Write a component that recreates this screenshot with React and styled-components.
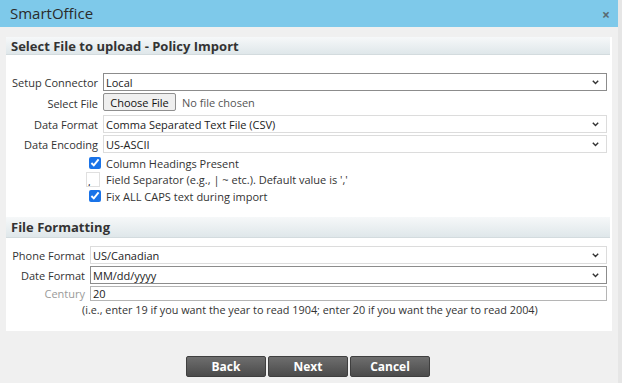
import React from 'react'
import styled, { createGlobalStyle } from 'styled-components'

const GlobalStyle = createGlobalStyle`
  html, body {
    margin: 0;
    padding: 0;
    background: #f0f0f0;
    font-family: "Open Sans", "Liberation Sans", sans-serif;
    color: #333;
  }
  * { box-sizing: border-box; }
`

const Dialog = styled.div`
  width: 622px;
  height: 383px;
  display: flex;
  flex-direction: column;
  background: #f0f0f0;
  border-right: 4px solid #e6e6e6;
`

const TitleBar = styled.div`
  height: 27px;
  background: #7ec9ea;
  display: flex;
  align-items: center;
  justify-content: space-between;
  padding: 0 10px;
`

const Title = styled.div`
  font-size: 15px;
  color: #2b2b2b;
  margin-top: -2px;
`

const Close = styled.div`
  font-size: 14px;
  font-weight: 700;
  color: #5a6a72;
  margin-right: -2px;
  margin-top: 1px;
`

const Panel = styled.div`
  margin: 10px 6px 0 6px;
  background: #fff;
  padding-bottom: 14px;
`

const SectionHeader = styled.div`
  height: ${p => p.$h || 18}px;
  margin-right: 2px;
  background: linear-gradient(#f6f8f9, #dfe7ea);
  border-bottom: 1px solid #d3dbde;
  font-size: 13px;
  font-weight: 700;
  color: #333;
  padding-left: 5px;
  display: flex;
  align-items: center;
`

const Fields = styled.div`
  display: grid;
  grid-template-columns: ${p => p.$label}px 1fr;
  column-gap: 5px;
  row-gap: ${p => p.$gap || 2}px;
  align-items: center;
  padding-right: 5px;
  margin-top: ${p => p.$top}px;
`

const Label = styled.label`
  font-size: 11px;
  line-height: 15px;
  text-align: right;
  color: ${p => (p.$muted ? '#9a9a9a' : '#333')};
  white-space: nowrap;
`

const SelectWrap = styled.div`
  position: relative;
  height: 18px;
`

const Select = styled.select`
  display: block;
  appearance: none;
  width: 100%;
  height: 18px;
  border: 1px solid ${p => (p.$strong ? '#8c8c8c' : '#dcdcdc')};
  border-radius: 0;
  background: #fff;
  font-family: inherit;
  font-size: 11px;
  color: #222;
  padding: 0 0 0 2px;
  margin: 0;
  outline: none;
`

const Chevron = styled.svg`
  position: absolute;
  right: 8px;
  top: 7px;
  pointer-events: none;
`

const TextInput = styled.input`
  display: block;
  width: 100%;
  height: 15px;
  border: 1px solid #b5b5b5;
  font-family: inherit;
  font-size: 11px;
  color: #222;
  padding: 0 2px;
  margin: 0;
  outline: none;
`

const FileRow = styled.div`
  display: flex;
  align-items: center;
  gap: 6px;
  height: 18px;
  margin: 0 0 2px;
`

const FileButton = styled.button`
  height: 18px;
  width: 73px;
  border: 1px solid #8f8f8f;
  border-radius: 2px;
  background: #efefef;
  font-family: inherit;
  font-size: 11px;
  color: #111;
  padding: 0;
`

const FileHint = styled.span`
  font-size: 11px;
  color: #555;
`

const Options = styled.div`
  display: flex;
  flex-direction: column;
  padding-left: 80px;
  margin-top: 2px;
`

const Option = styled.label`
  display: flex;
  align-items: center;
  height: ${p => p.$h || 16}px;
  font-size: 11px;
  color: #333;
`

const Check = styled.input`
  width: 12px;
  height: 12px;
  margin: 0 5px 0 3px;
  accent-color: #1a73e8;
`

const SepInput = styled.input`
  width: 14px;
  height: 15px;
  border: 1px solid #e0e0e0;
  margin: 0 6px 0 0;
  padding: 4px 0 0 1px;
  font-family: inherit;
  font-size: 10px;
  line-height: 8px;
  outline: none;
`

const Section2 = styled.div`
  margin-top: 13px;
`

const Note = styled.div`
  font-size: 10.85px;
  color: #333;
  padding-left: 76px;
  margin-top: 1px;
`

const Buttons = styled.div`
  display: flex;
  justify-content: center;
  gap: 2px;
  margin-top: 25px;
  padding-right: 2px;
`

const Button = styled.button`
  width: ${p => p.$w || 80}px;
  height: 21px;
  border: 1px solid #3f3f3f;
  border-radius: 2px;
  background: linear-gradient(#6e6e6e, #4b4b4b);
  color: #fff;
  font-family: inherit;
  font-size: 12px;
  font-weight: 700;
  padding: 0;
`

const Dropdown = ({ value, strong }) => (
  <SelectWrap>
    <Select $strong={strong} defaultValue={value}>
      <option>{value}</option>
    </Select>
    <Chevron width="7" height="5" viewBox="0 0 7 5">
      <path d="M0.8 0.8 L3.5 3.6 L6.2 0.8" fill="none" stroke="#333" strokeWidth="1.4" />
    </Chevron>
  </SelectWrap>
)

export default function App() {
  return (
    <>
      <GlobalStyle />
      <Dialog>
        <TitleBar>
          <Title>SmartOffice</Title>
          <Close>×</Close>
        </TitleBar>
        <Panel>
          <SectionHeader>Select File to upload - Policy Import</SectionHeader>
          <Fields $label={92} $top={18}>
            <Label>Setup Connector</Label>
            <Dropdown value="Local" strong />
            <Label>Select File</Label>
            <FileRow>
              <FileButton>Choose File</FileButton>
              <FileHint>No file chosen</FileHint>
            </FileRow>
            <Label>Data Format</Label>
            <Dropdown value="Comma Separated Text File (CSV)" />
            <Label>Data Encoding</Label>
            <Dropdown value="US-ASCII" />
          </Fields>
          <Options>
            <Option>
              <Check type="checkbox" defaultChecked />
              Column Headings Present
            </Option>
            <Option $h={17}>
              <SepInput defaultValue="," />
              Field Separator (e.g., | ~ etc.). Default value is ','
            </Option>
            <Option>
              <Check type="checkbox" defaultChecked />
              Fix ALL CAPS text during import
            </Option>
          </Options>
          <Section2>
            <SectionHeader $h={21}>File Formatting</SectionHeader>
            <Fields $label={79} $top={8}>
              <Label>Phone Format</Label>
              <Dropdown value="US/Canadian" />
              <Label>Date Format</Label>
              <Dropdown value="MM/dd/yyyy" strong />
              <Label $muted>Century</Label>
              <TextInput defaultValue="20" />
            </Fields>
            <Note>(i.e., enter 19 if you want the year to read 1904; enter 20 if you want the year to read 2004)</Note>
          </Section2>
        </Panel>
        <Buttons>
          <Button $w={80}>Back</Button>
          <Button $w={80}>Next</Button>
          <Button $w={80}>Cancel</Button>
        </Buttons>
      </Dialog>
    </>
  )
}
